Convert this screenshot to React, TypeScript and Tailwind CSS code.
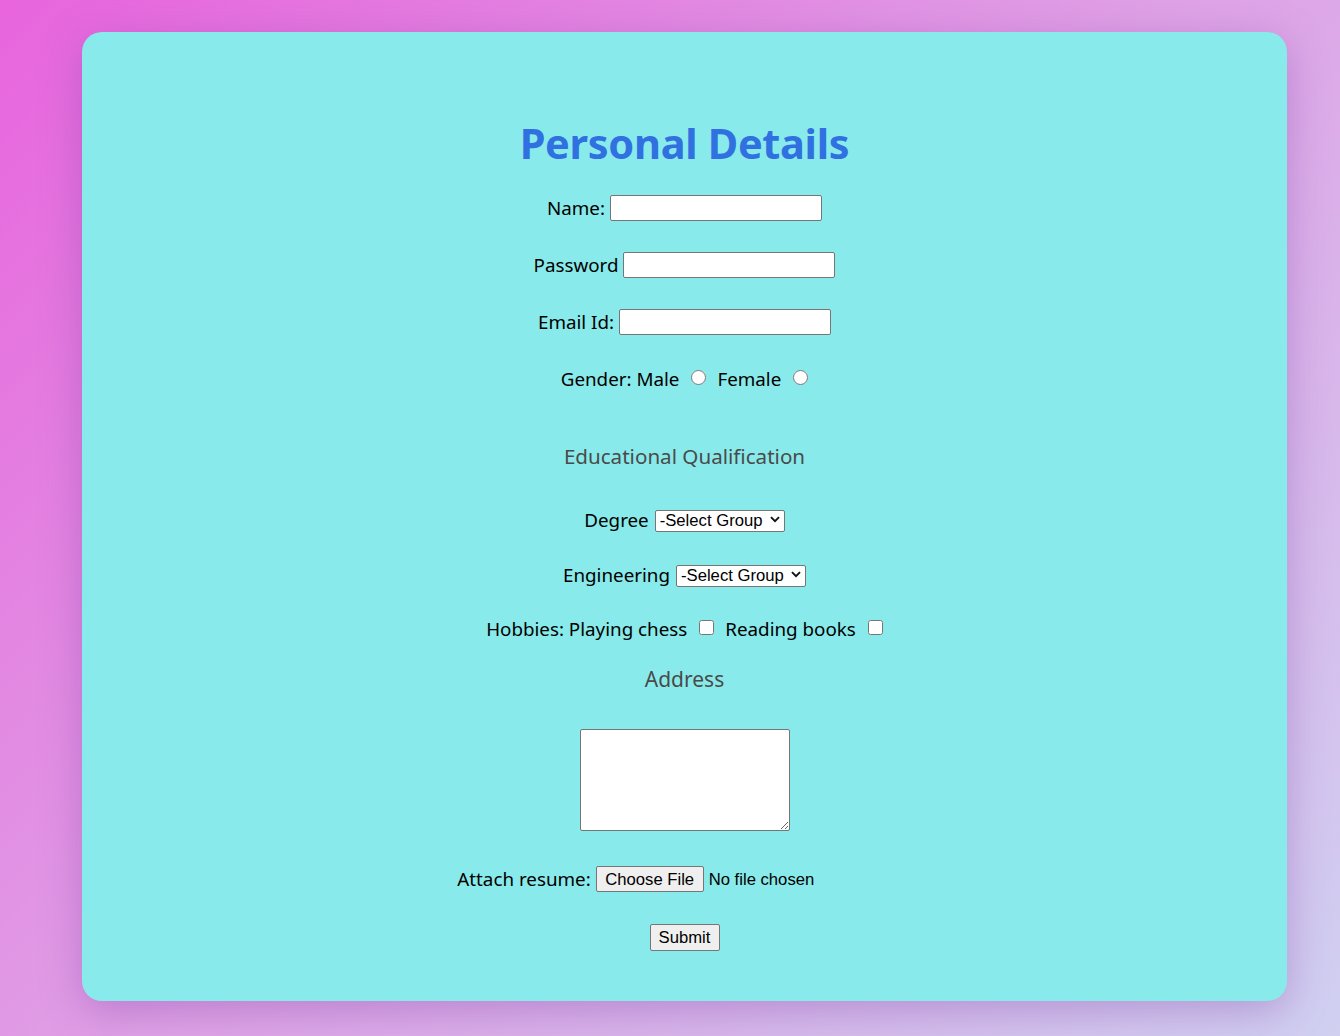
import React from 'react';

const label = 'text-[18.8px] text-black';
const control = "font-['Liberation_Sans',Arial,sans-serif] text-[16.67px] text-black";

function Row({ className = '', children }: { className?: string; children: React.ReactNode }) {
  return <div className={`h-[30px] flex items-center justify-center ${className}`}>{children}</div>;
}

function TextBox({ type = 'text' }: { type?: string }) {
  return (
    <input
      type={type}
      className={`${control} ml-[5px] w-[212px] h-[26px] bg-white border border-[#767676] rounded-[2px] px-1 outline-none`}
    />
  );
}

function Select() {
  return (
    <div className="relative ml-[6px]">
      <select className={`${control} appearance-none w-[130px] h-[22px] leading-[20px] bg-white border border-[#767676] rounded-[2px] pl-[4px] pr-[16px] outline-none`}>
        <option>-Select Group</option>
        <option>Science</option>
        <option>Commerce</option>
        <option>Arts</option>
      </select>
      <svg
        className="absolute right-[5px] top-[8px] pointer-events-none"
        width="10"
        height="7"
        viewBox="0 0 10 7"
        fill="none"
      >
        <path d="M1 1.2 L5 5.2 L9 1.2" stroke="#111" strokeWidth="1.9" />
      </svg>
    </div>
  );
}

export default function App() {
  return (
    <div className="min-h-screen w-full bg-[linear-gradient(135deg,#e864dd_0%,#dfa2e6_50%,#d0d0f1_100%)] pt-[32px] pb-[35px] px-[82px] font-['Noto_Sans','Open_Sans',sans-serif]">
      <form
        onSubmit={(e) => e.preventDefault()}
        className="w-[1205px] h-[969px] bg-[#88eaea] rounded-[20px] shadow-[0_10px_40px_rgba(120,60,160,0.35)] pt-[86px]"
      >
        <h1 className="h-[50px] flex items-center justify-center text-[41.5px] font-bold text-[#3070e0] tracking-[-0.3px]">
          Personal Details
        </h1>

        <Row className="mt-[25px]">
          <span className={label}>Name:</span>
          <TextBox />
        </Row>
        <Row className="mt-[27px]">
          <span className={label}>Password</span>
          <TextBox type="password" />
        </Row>
        <Row className="mt-[27px]">
          <span className={label}>Email Id:</span>
          <TextBox type="email" />
        </Row>
        <Row className="mt-[27px]">
          <span className={label}>Gender: Male</span>
          <input type="radio" name="gender" className="w-[15px] h-[15px] ml-[12px] mr-[11px] -mt-[3px]" />
          <span className={label}>Female</span>
          <input type="radio" name="gender" className="w-[15px] h-[15px] ml-[12px] -mt-[3px]" />
        </Row>

        <Row className="mt-[47px]">
          <span className="text-[20.6px] text-[#4a4a4a]">Educational Qualification</span>
        </Row>

        <Row className="mt-[34px]">
          <span className={label}>Degree</span>
          <Select />
        </Row>
        <Row className="mt-[25px]">
          <span className={label}>Engineering</span>
          <Select />
        </Row>
        <Row className="mt-[24px]">
          <span className={label}>Hobbies: Playing chess</span>
          <input type="checkbox" className="w-[15px] h-[15px] ml-[12px] mr-[11px] -mt-[3px]" />
          <span className={label}>Reading books</span>
          <input type="checkbox" className="w-[15px] h-[15px] ml-[12px] -mt-[3px]" />
        </Row>

        <Row className="mt-[21px]">
          <span className="text-[21px] text-[#4a4a4a]">Address</span>
        </Row>

        <div className="mt-[34px] flex justify-center">
          <textarea className="w-[210px] h-[102px] bg-white border border-[#767676] rounded-[2px] p-1 text-[16.67px] outline-none" />
        </div>

        <Row className="mt-[33px]">
          <span className={label}>Attach resume:</span>
          <div className="ml-[5px] w-[316px] flex items-center">
            <button
              type="button"
              className={`${control} h-[26px] w-[108px] bg-[#efefef] border border-[#767676] rounded-[2px]`}
            >
              Choose File
            </button>
            <span className={`${control} ml-[5px]`}>No file chosen</span>
          </div>
        </Row>

        <Row className="mt-[28px]">
          <button
            type="submit"
            className={`${control} h-[27px] w-[70px] bg-[#efefef] border border-[#767676] rounded-[2px]`}
          >
            Submit
          </button>
        </Row>
      </form>
    </div>
  );
}
